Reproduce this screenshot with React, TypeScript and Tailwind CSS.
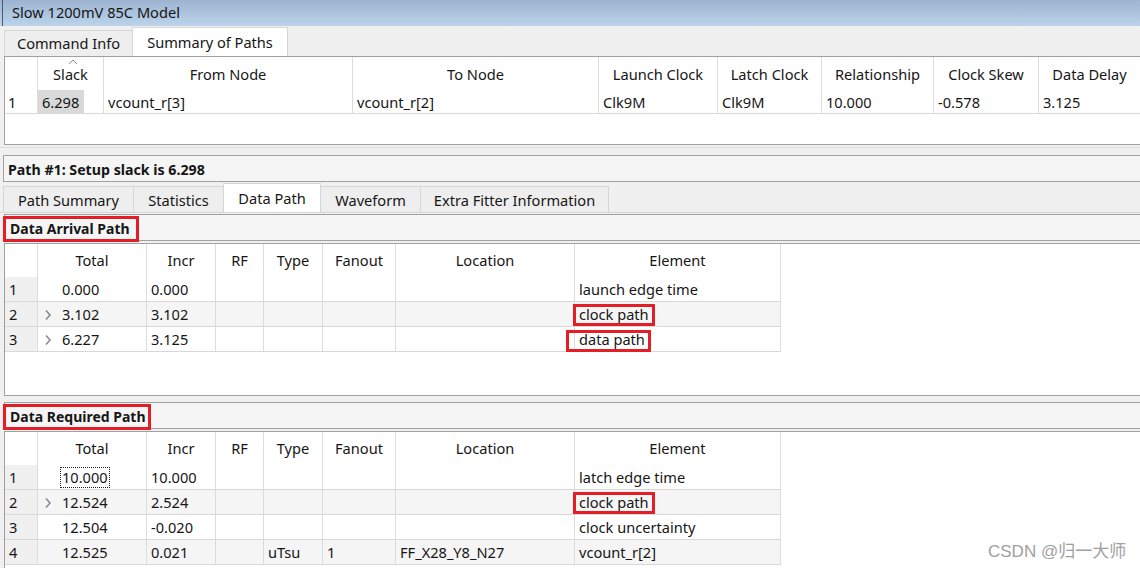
import React from "react";

const Chevron = () => (
  <svg width="8" height="12" viewBox="0 0 8 12" className="shrink-0">
    <polyline points="2,1.5 6,6 2,10.5" fill="none" stroke="#8c8c8c" strokeWidth="1.6" />
  </svg>
);

type Row = {
  total: string;
  incr: string;
  type?: string;
  fanout?: string;
  loc?: string;
  el: string;
  chevron?: boolean;
  focus?: boolean;
  red?: "a" | "b";
};

const cols2 = "grid grid-cols-[33px_109px_69px_48px_59px_73px_179px_206px]";

function PathTable({ rows, height }: { rows: Row[]; height: string }) {
  return (
    <div className={`ml-[4px] ${height} border-t border-l border-b border-[#a0a0a0] bg-white`}>
      <div className={`${cols2} h-[33px]`}>
        <div className="border-r border-[#dcdcdc]" />
        {["Total", "Incr", "RF", "Type", "Fanout", "Location", "Element"].map((h) => (
          <div key={h} className="border-r border-[#dcdcdc] flex items-center justify-center pt-[1px]">
            {h}
          </div>
        ))}
      </div>
      {rows.map((r, i) => (
        <div
          key={i}
          className={`${cols2} h-[25px] border-b border-[#d8d8d8] w-[776px] ${i % 2 === 1 ? "bg-[#f5f5f5]" : "bg-white"}`}
        >
          <div className="bg-[#f0f0f0] border-r border-[#dcdcdc] pl-[4px] flex items-center pt-[1px]">{i + 1}</div>
          <div className="border-r border-[#dcdcdc] flex items-center pl-[6px] pt-[1px]">
            <div className="w-[8px] mr-[10px]">{r.chevron ? <Chevron /> : null}</div>
            {r.focus ? (
              <span className="border border-dotted border-[#222] px-[1px] leading-[19px] -ml-[2px]">{r.total}</span>
            ) : (
              <span>{r.total}</span>
            )}
          </div>
          <div className="border-r border-[#dcdcdc] flex items-center pl-[4px] pt-[1px]">{r.incr}</div>
          <div className="border-r border-[#dcdcdc]" />
          <div className="border-r border-[#dcdcdc] flex items-center pl-[4px] pt-[1px]">{r.type ?? ""}</div>
          <div className="border-r border-[#dcdcdc] flex items-center pl-[4px] pt-[1px]">{r.fanout ?? ""}</div>
          <div className="border-r border-[#dcdcdc] flex items-center pl-[4px] pt-[1px]">{r.loc ?? ""}</div>
          <div className="border-r border-[#dcdcdc] flex items-center pl-[4px] pt-[1px] relative">
            {r.el}
            {r.red === "a" && (
              <div className="absolute left-[-2px] top-[2px] w-[82px] h-[22px] border-[3px] border-[#e41e26]" />
            )}
            {r.red === "b" && (
              <div className="absolute left-[-9px] top-[3px] w-[85px] h-[22px] border-[3px] border-[#e41e26]" />
            )}
          </div>
        </div>
      ))}
    </div>
  );
}

function SectionHeader({ title, w }: { title: string; w: string }) {
  return (
    <div className="ml-[4px] h-[27px] border border-r-0 border-[#a0a0a0] bg-[#f5f5f5] relative flex items-center">
      <span className="pl-[5px] font-bold text-[14px] pt-[2px]">{title}</span>
      <div className={`absolute left-[-2px] top-[1px] ${w} h-[26px] border-[3px] border-[#e41e26]`} />
    </div>
  );
}

export default function App() {
  const cols1 = "grid grid-cols-[33px_66px_249px_246px_119px_104px_112px_105px_102px]";
  const headers1 = ["Slack", "From Node", "To Node", "Launch Clock", "Latch Clock", "Relationship", "Clock Skew", "Data Delay"];
  const data1 = ["vcount_r[3]", "vcount_r[2]", "Clk9M", "Clk9M", "10.000", "-0.578", "3.125"];

  const arrival: Row[] = [
    { total: "0.000", incr: "0.000", el: "launch edge time" },
    { total: "3.102", incr: "3.102", el: "clock path", chevron: true, red: "a" },
    { total: "6.227", incr: "3.125", el: "data path", chevron: true, red: "b" },
  ];
  const required: Row[] = [
    { total: "10.000", incr: "10.000", el: "latch edge time", focus: true },
    { total: "12.524", incr: "2.524", el: "clock path", chevron: true, red: "a" },
    { total: "12.504", incr: "-0.020", el: "clock uncertainty" },
    { total: "12.525", incr: "0.021", type: "uTsu", fanout: "1", loc: "FF_X28_Y8_N27", el: "vcount_r[2]" },
  ];

  return (
    <div className="w-[1140px] h-[568px] bg-[#f0f0f0] overflow-hidden relative font-['Noto_Sans',sans-serif] text-[14.6px] text-[#161616]">
      {/* title bar */}
      <div className="h-[26px] pl-[2px] bg-gradient-to-b from-[#9cb4d0] to-[#bcd3eb]">
        <div className="h-full border-l border-[#505a66] pl-[9px] flex items-center">Slow 1200mV 85C Model</div>
      </div>
      {/* tabs */}
      <div className="h-[30px] flex items-end pl-[4px]">
        <div className="w-[128px] h-[26px] bg-[#eeeeee] border-t border-l border-[#d6d6d6] flex items-center justify-center">
          Command Info
        </div>
        <div className="w-[156px] h-[29px] bg-white border-t border-l border-r border-[#d6d6d6] flex items-center justify-center pt-[2px]">
          Summary of Paths
        </div>
      </div>
      {/* table 1 */}
      <div className="ml-[4px] h-[89px] border-t border-l border-b border-[#a0a0a0] bg-white">
        <div className={`${cols1} h-[33px]`}>
          <div className="border-r border-[#dcdcdc]" />
          {headers1.map((h, i) => (
            <div key={h} className="border-r border-[#dcdcdc] flex items-center justify-center relative pt-[2px]">
              {i === 0 && (
                <svg width="10" height="6" viewBox="0 0 10 6" className="absolute top-[2px] left-[30px]">
                  <polyline points="1,5 5,1 9,5" fill="none" stroke="#8a8a8a" strokeWidth="1" />
                </svg>
              )}
              {h}
            </div>
          ))}
        </div>
        <div className={`${cols1} h-[24px] border-b border-[#d8d8d8]`}>
          <div className="border-r border-[#dcdcdc] pl-[3px] flex items-center pt-[2px]">1</div>
          <div className="border-r border-[#dcdcdc] flex">
            <span className="bg-[#d9d9d9] w-[46px] pl-[4px] flex items-center pt-[2px]">6.298</span>
          </div>
          {data1.map((d, i) => (
            <div key={i} className="border-r border-[#dcdcdc] flex items-center pl-[4px] pt-[2px]">
              {d}
            </div>
          ))}
        </div>
      </div>
      {/* spacer strip */}
      <div className="h-[2px]" />
      <div className="h-px bg-[#dcdcdc]" />
      <div className="h-[7px]" />
      {/* path bar */}
      <div className="ml-[3px] h-[27px] border-t border-b border-l border-[#a0a0a0] bg-[#f5f5f5] flex items-center pl-[4px] font-bold text-[14.2px] pt-[2px]">
        Path #1: Setup slack is 6.298
      </div>
      {/* tabs 2 */}
      <div className="h-[31px] flex items-end pl-[3px] border-b border-[#d8d8d8]">
        {[
          ["Path Summary", "w-[130px]"],
          ["Statistics", "w-[90px]"],
        ].map(([t, w]) => (
          <div key={t} className={`${w} h-[26px] bg-[#eeeeee] border-t border-l border-[#d6d6d6] flex items-center justify-center pt-[2px]`}>
            {t}
          </div>
        ))}
        <div className="w-[98px] h-[29px] bg-white border-t border-l border-r border-[#d6d6d6] flex items-center justify-center pt-[1px]">
          Data Path
        </div>
        <div className="w-[100px] h-[26px] bg-[#eeeeee] border-t border-r border-[#d6d6d6] flex items-center justify-center pt-[2px]">
          Waveform
        </div>
        <div className="w-[188px] h-[26px] bg-[#eeeeee] border-t border-r border-[#d6d6d6] flex items-center justify-center pt-[2px]">
          Extra Fitter Information
        </div>
      </div>
      <div className="h-[1px]" />
      <SectionHeader title="Data Arrival Path" w="w-[136px]" />
      <div className="h-[2px]" />
      <PathTable rows={arrival} height="h-[153px]" />
      <div className="h-[6px]" />
      <SectionHeader title="Data Required Path" w="w-[148px]" />
      <div className="h-[2px]" />
      <PathTable rows={required} height="h-[140px]" />

      <div className="absolute left-[988px] top-[539px] text-[17px] text-[#a0a0a0] font-['Liberation_Sans','Noto_Sans_CJK_SC',sans-serif]">
        CSDN @归一大师
      </div>
    </div>
  );
}
